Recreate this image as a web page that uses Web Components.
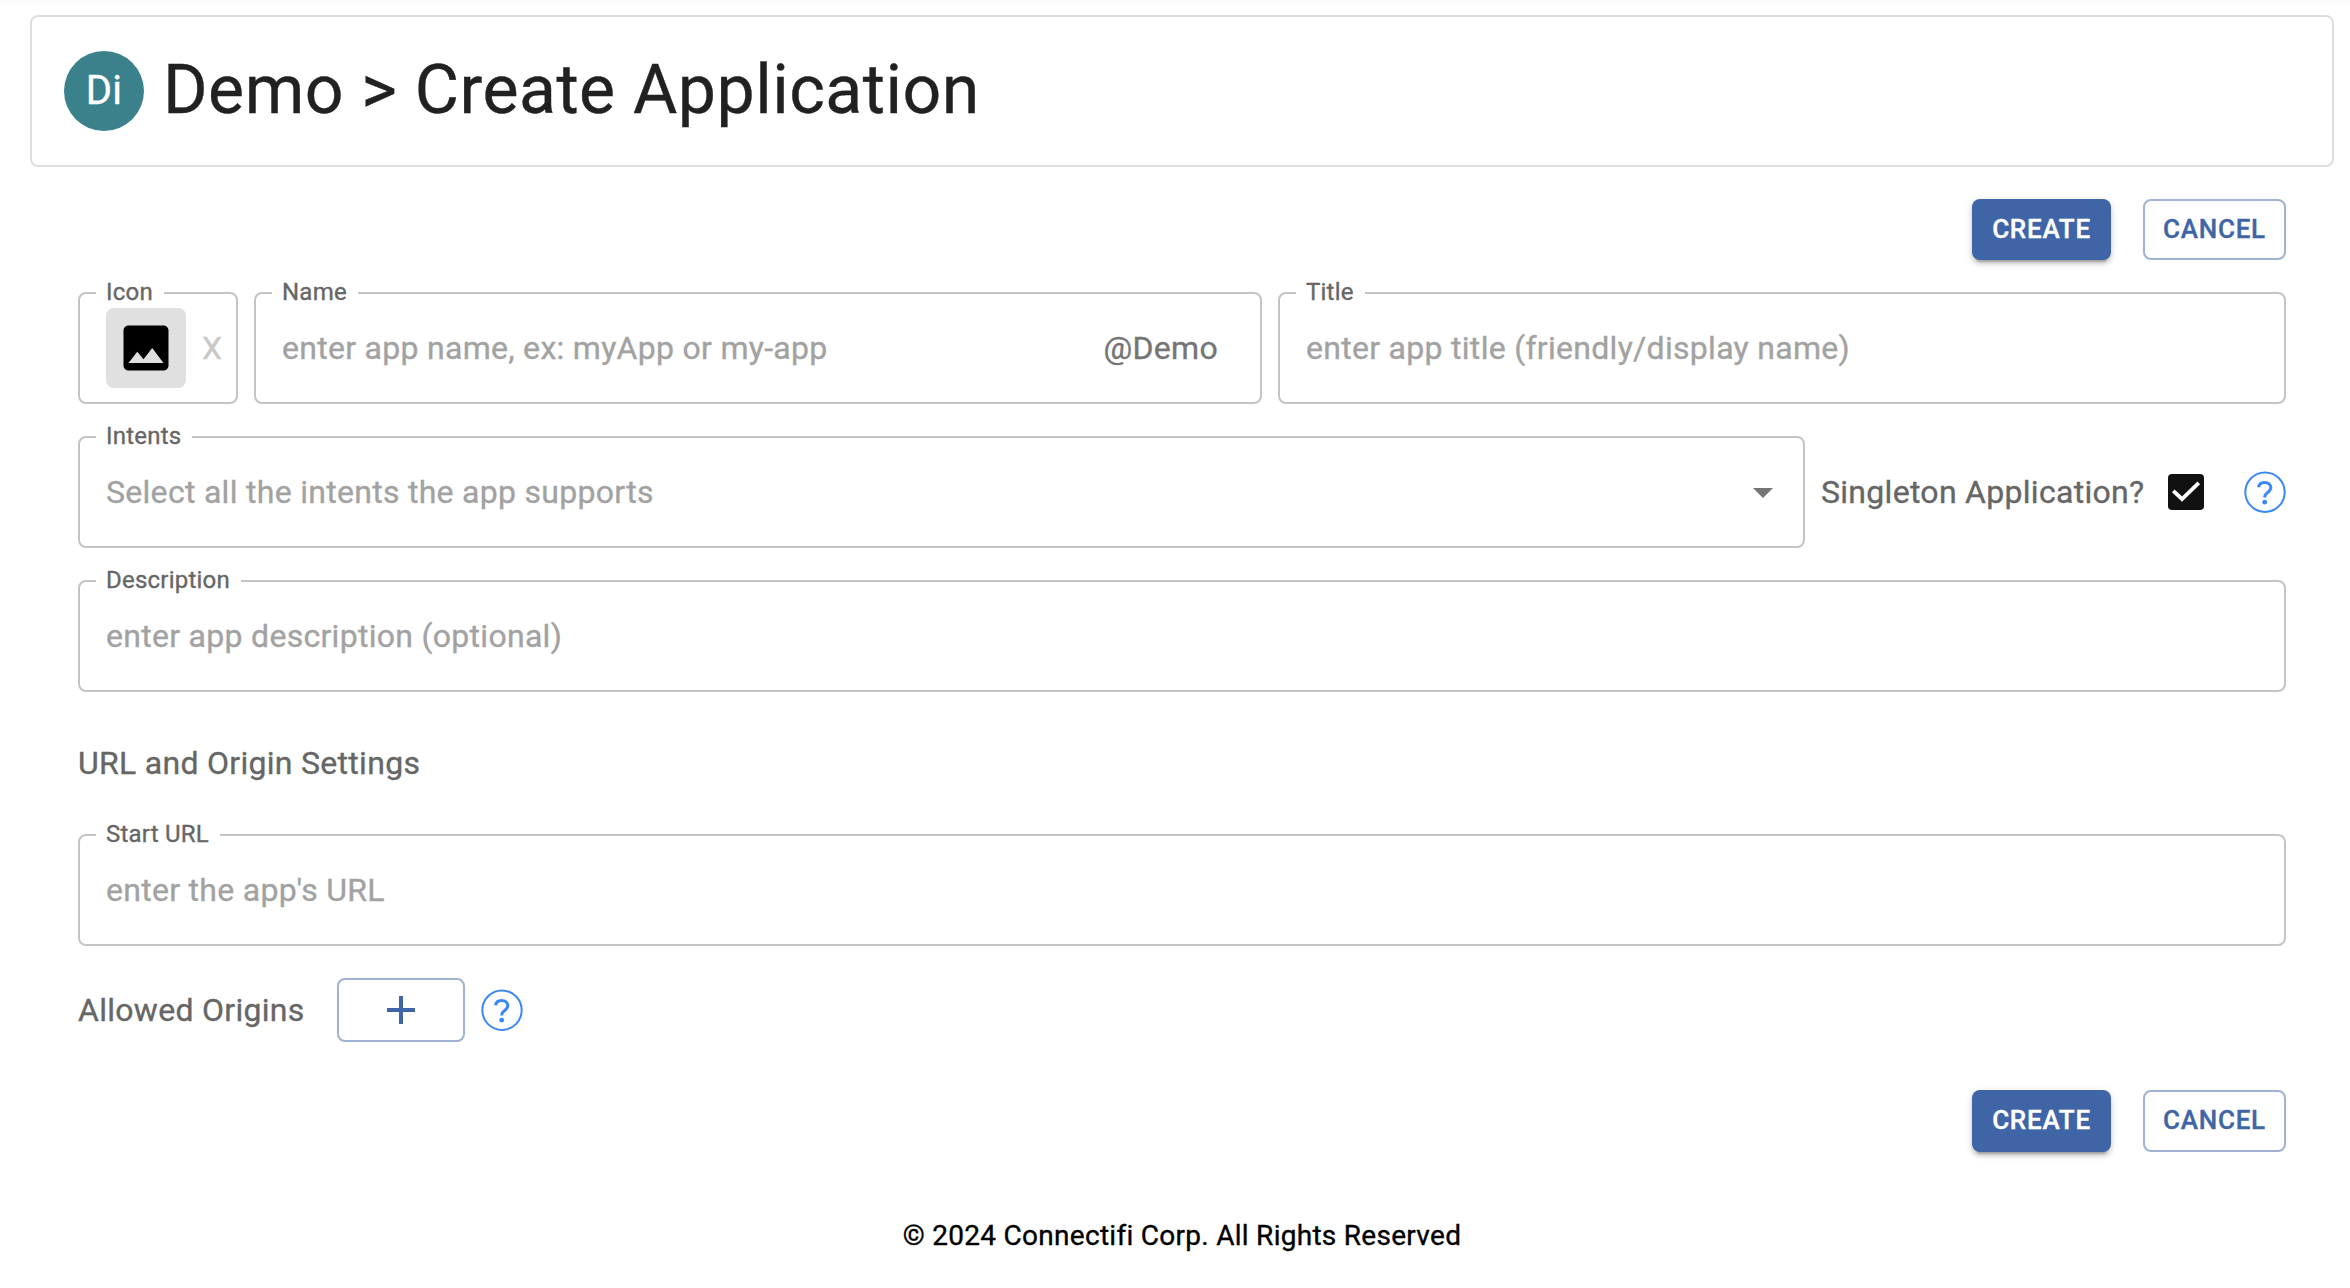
<!DOCTYPE html>
<html lang="en">
<head>
<meta charset="utf-8">
<title>Create Application</title>
<style>
html,body{margin:0;background:#fff}
body{font-family:Roboto,"Liberation Sans",sans-serif;font-size:32px;letter-spacing:.29px;color:#666;-webkit-text-stroke:.35px currentColor}
</style>
</head>
<body>
<create-page></create-page>
<script>
const define = (name, html) => customElements.define(name, class extends HTMLElement {
  constructor() {
    super();
    const t = document.createElement('template');
    t.innerHTML = html;
    this.attachShadow({ mode: 'open' }).append(t.content.cloneNode(true));
  }
});

define('page-header', `
<style>
:host{display:flex;align-items:center;box-sizing:border-box;height:152px;padding:0 32px;gap:19px;border:2px solid #dedede;border-radius:8px}
.avatar{width:80px;height:80px;border-radius:50%;background:#3a818c;color:#fff;display:flex;align-items:center;justify-content:center;font-size:40px;line-height:76px;letter-spacing:.3px;flex:none}
h1{margin:-2px 0 0;font-size:68px;line-height:84px;font-weight:400;letter-spacing:.48px;color:#212121;white-space:nowrap}
</style>
<div class="avatar"><span>Di</span></div><h1><slot></slot></h1>`);

define('form-button', `
<style>
:host{display:block}
button{display:flex;align-items:center;justify-content:center;box-sizing:border-box;width:var(--w,143px);height:var(--h,61px);margin:0;padding:0 0 var(--lift,0px);border:2px solid #9fb2d4;border-radius:8px;background:none;color:#3f65a6;font:500 26px/45px Roboto,sans-serif;letter-spacing:.743px}
:host([contained]) button{border:0;background:#3f65a6;color:#fff;box-shadow:0 6px 2px -4px rgba(0,0,0,.2),0 4px 4px 0 rgba(0,0,0,.14),0 2px 10px 0 rgba(0,0,0,.12)}
</style>
<button><slot></slot></button>`);

define('action-bar', `
<style>:host{display:flex;justify-content:flex-end;gap:32px}</style>
<form-button contained style="--w:139px">CREATE</form-button><form-button>CANCEL</form-button>`);

define('outlined-field', `
<style>
:host{display:block;min-width:0}
fieldset{box-sizing:border-box;height:124px;margin:0;padding:0 26px 0 16px;border:2px solid #c4c4c4;border-radius:8px;min-width:0}
legend{height:26px;padding:0 11px 0 10px;font-size:24px;line-height:24px;letter-spacing:.225px;color:#666;white-space:nowrap}
.body{display:flex;align-items:center;justify-content:space-between;height:84px;padding-left:10px;color:#a2a2a2;white-space:nowrap}
</style>
<fieldset><legend><slot name="label"></slot></legend><div class="body"><slot></slot></div></fieldset>`);

define('icon-picker', `
<style>
:host{display:flex;align-items:center;gap:16px}
.tile{display:flex;align-items:center;justify-content:center;width:80px;height:80px;border-radius:8px;background:#e0e0e0}
svg{display:block;width:60px;height:60px;fill:#000}
.x{color:#c8c8c8}
</style>
<div class="tile"><svg viewBox="0 0 24 24"><path d="M21 19V5c0-1.100-.9-2-2-2H5c-1.100 0-2 .9-2 2v14c0 1.100.9 2 2 2h14c1.100 0 2-.9 2-2zM8.500 13.500l2.500 3.010L14.500 12l4.500 6H5l3.500-4.500z"/></svg></div><span class="x">X</span>`);

define('drop-arrow', `
<style>:host{display:block;margin-right:-10px}svg{display:block;width:48px;height:48px;fill:#757575}</style>
<svg viewBox="0 0 24 24"><path d="M7 10l5 5 5-5z"/></svg>`);

define('check-box', `
<style>:host{display:block}svg{display:block;width:36px;height:36px}</style>
<svg viewBox="0 0 36 36"><rect width="36" height="36" rx="4" fill="#111"/><path d="M5.300 16.800L14 25L30.800 8.800" fill="none" stroke="#fff" stroke-width="3.800"/></svg>`);

define('help-icon', `
<style>:host{display:block}svg{display:block;width:42px;height:42px}</style>
<svg viewBox="0 0 42 42"><circle cx="21" cy="21.200" r="19.700" fill="none" stroke="#3b87f7" stroke-width="2"/><path d="M14.700 16.400C14.900 13.100 17.300 11.400 20.600 11.400c3.500 0 6.200 2 6.200 5.200 0 2.500-1.500 3.800-3.400 5.100-1.900 1.300-2.600 2.100-2.600 4v.8" fill="none" stroke="#3b87f7" stroke-width="3"/><circle cx="20.700" cy="31.200" r="2.400" fill="#3b87f7"/></svg>`);

define('plus-icon', `
<style>:host{display:block}svg{display:block;width:28px;height:28px}</style>
<svg viewBox="0 0 28 28"><path d="M14 0v28M0 14h28" stroke="#3f65a6" stroke-width="4"/></svg>`);

define('create-page', `
<style>
:host{display:flex;flex-direction:column;box-sizing:border-box;height:1288px;padding:15px 16px 0 30px;overflow:hidden;background:linear-gradient(#f9f9f9,#fff 6px)}
.form{display:flex;flex-direction:column;padding:32px 48px 0}
.row{display:flex;gap:16px}
.row.top{display:grid;grid-template-columns:160px 1fr 1fr;margin-top:20px}
.next{margin-top:20px}
.intents outlined-field{width:1727px;flex:none}
.single{display:flex;flex:1;align-items:center;justify-content:space-between;height:112px;margin-top:12px;white-space:nowrap}
.single span{display:flex;align-items:center;gap:24px}
.suffix{color:#757575;margin-right:16px}
h2{margin:49px 0 0;font-size:32px;line-height:44px;font-weight:400;color:#666;letter-spacing:.29px}
.url{margin-top:37px}
.origins{display:flex;align-items:center;margin-top:32px;height:64px}
.origins form-button{margin:0 16px 0 32px}
.bottom{margin-top:48px;--h:62px;--lift:2px}
footer{margin-top:64px;text-align:center;font-size:28px;line-height:40px;letter-spacing:.28px;color:#000}
</style>
<page-header>Demo &gt; Create Application</page-header>
<div class="form">
<action-bar></action-bar>
<div class="row top">
<outlined-field><span slot="label">Icon</span><icon-picker></icon-picker></outlined-field>
<outlined-field><span slot="label">Name</span><span>enter app name, ex: myApp or my-app</span><span class="suffix">@Demo</span></outlined-field>
<outlined-field><span slot="label">Title</span><span>enter app title (friendly/display name)</span></outlined-field>
</div>
<div class="row next intents">
<outlined-field><span slot="label">Intents</span><span>Select all the intents the app supports</span><drop-arrow></drop-arrow></outlined-field>
<div class="single"><span>Singleton Application?<check-box></check-box></span><help-icon></help-icon></div>
</div>
<outlined-field class="next"><span slot="label">Description</span><span>enter app description (optional)</span></outlined-field>
<h2>URL and Origin Settings</h2>
<outlined-field class="url"><span slot="label">Start URL</span><span>enter the app's URL</span></outlined-field>
<div class="origins"><span>Allowed Origins</span><form-button style="--w:128px;--h:64px"><plus-icon></plus-icon></form-button><help-icon></help-icon></div>
<action-bar class="bottom"></action-bar>
</div>
<footer>© 2024 Connectifi Corp. All Rights Reserved</footer>`);
</script>
</body>
</html>
